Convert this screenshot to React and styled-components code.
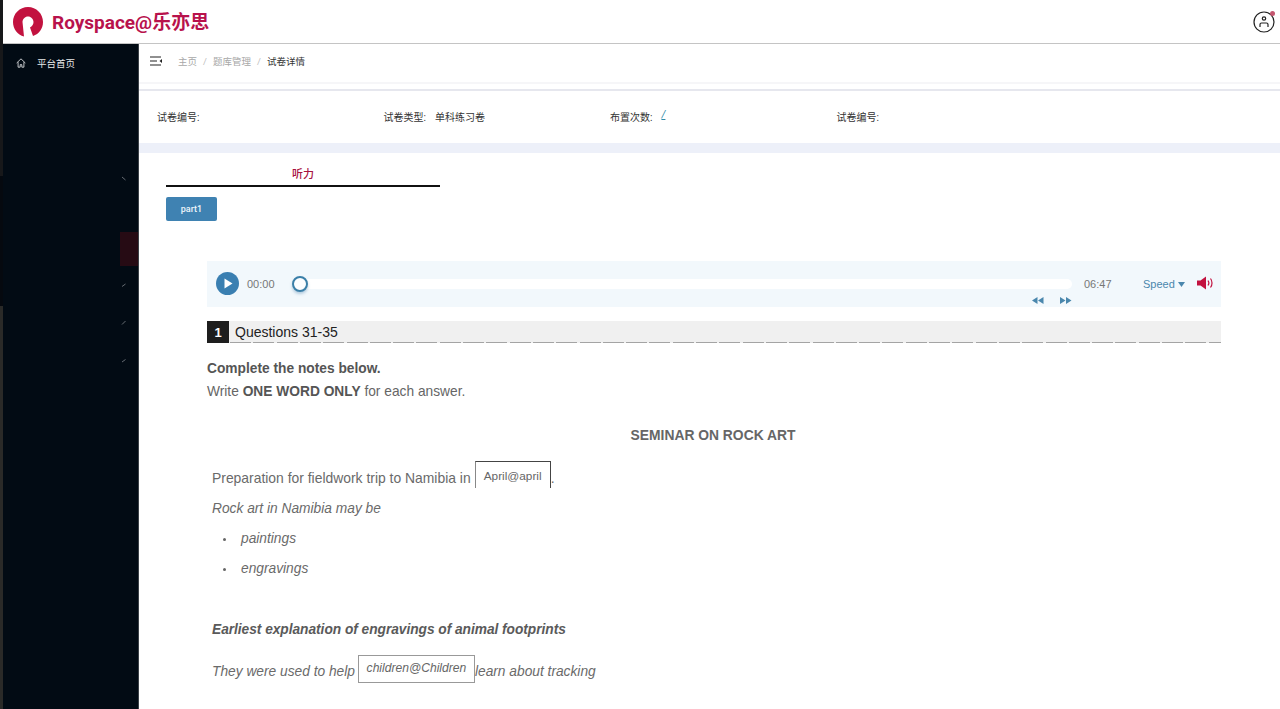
import React from "react";
import styled, { createGlobalStyle } from "styled-components";

const Global = createGlobalStyle`
  html, body { margin: 0; padding: 0; height: 100%; background: #fff; overflow: hidden; }
  #root { height: 709px; }
  * { box-sizing: border-box; }
`;
const CN = `"Roboto", "Noto Sans CJK SC", sans-serif`;
const HV = `"Liberation Sans", Arial, sans-serif`;

const Page = styled.div`display:flex;height:709px;width:1280px;background:#fff;`;
const Edge = styled.div`width:3px;flex:none;background:linear-gradient(#17181a 0,#17181a 176px,#05090f 176px,#05090f 306px,#2a2a28 306px,#2a2a28 100%);`;
const Shell = styled.div`flex:1;display:flex;flex-direction:column;min-width:0;`;
const Header = styled.header`height:44px;flex:none;display:flex;align-items:center;justify-content:space-between;padding:0 5px 0 10px;border-bottom:1px solid #c4c4c4;`;
const Brand = styled.div`display:flex;align-items:center;gap:9px;`;
const BrandName = styled.span`font:700 19px ${CN};color:#b8124c;line-height:24px;padding-top:2px;`;
const Avatar = styled.div`position:relative;width:22px;height:22px;`;
const Dot = styled.span`position:absolute;top:0;right:0;width:5px;height:5px;border-radius:50%;background:#c4566f;`;
const Body = styled.div`flex:1;display:flex;min-height:0;`;
const Side = styled.nav`width:136px;flex:none;background:#020b14;border-right:1px solid #3c4248;display:flex;flex-direction:column;`;
const HomeItem = styled.div`height:38px;display:flex;align-items:center;padding-left:13px;gap:11px;font:400 9.5px ${CN};color:#e7e9ea;`;
const Chev = styled.div`height:${p=>p.$h}px;margin-top:${p=>p.$top||0}px;display:flex;align-items:center;justify-content:flex-end;padding-right:11px;`;
const ActiveMark = styled.div`height:34px;width:18px;margin:${p=>p.$top}px 0 0 auto;background:#260b14;`;
const Main = styled.main`flex:1;min-width:0;display:flex;flex-direction:column;`;
const Crumbs = styled.div`height:38px;flex:none;display:flex;align-items:center;padding:0 0 4px 11px;font:400 9.5px ${CN};color:#a8a8a8;`;
const CrumbIcon = styled.span`display:flex;margin-right:16px;`;
const Sep = styled.span`margin:0 6px;color:#c0c0c0;`;
const CrumbNow = styled.span`color:#333;`;
const Tag = styled.div`height:7px;flex:none;background:#fff;border-top:2px solid #f6f6f8;`;
const Rule = styled.div`height:2px;flex:none;background:#e6e7ee;`;
const Info = styled.div`height:52px;flex:none;display:flex;align-items:center;padding:0 0 2px 18px;font:400 10px ${CN};color:#333;`;
const InfoCell = styled.div`width:226.5px;flex:none;display:flex;gap:9px;`;
const SlashLink = styled.span`color:#2f8aa8;font-style:italic;text-decoration:underline;font-size:10px;`;
const Band = styled.div`height:10px;flex:none;background:#edf0f9;`;
const Content = styled.div`flex:1;min-height:0;overflow:hidden;padding:0 59px 0 27px;`;
const Tabs = styled.div`width:274px;height:34px;display:flex;align-items:center;justify-content:center;border-bottom:2px solid #111;font:500 11px ${CN};color:#a8123f;padding:12px 0 4px;`;
const PartBtn = styled.button`display:block;margin-top:10px;width:51px;height:24px;border:0;border-radius:2px;background:#3f82b2;color:#eef5fa;font:500 9px ${CN};padding:0;`;
const Sheet = styled.div`margin:40px 0 0 41px;`;
const Player = styled.div`height:46px;background:#f2f8fc;display:flex;align-items:flex-start;padding-left:9px;font:400 11px ${HV};color:#777;`;
const PlayBtn = styled.span`width:23px;height:23px;margin-top:11px;border-radius:50%;background:#3a7fb1;display:flex;align-items:center;justify-content:center;flex:none;`;
const Time = styled.span`margin-top:17px;line-height:13px;width:${p=>p.$w}px;flex:none;margin-left:${p=>p.$l}px;`;
const TrackWrap = styled.div`position:relative;width:780px;flex:none;margin-left:7px;height:46px;`;
const Track = styled.div`position:absolute;left:0;right:0;top:18px;height:10px;background:#fff;border-radius:5px;`;
const Thumb = styled.span`position:absolute;left:0;top:15px;width:16px;height:16px;border-radius:50%;border:2px solid #3a7fa8;background:#fbfdff;box-shadow:0 2px 3px rgba(60,120,170,.35);`;
const Skips = styled.div`position:absolute;right:0;top:36px;display:flex;gap:16px;`;
const Speed = styled.span`margin:17px 0 0 0;line-height:13px;color:#4a87ad;display:flex;align-items:center;gap:3px;width:54px;flex:none;`;
const VolBtn = styled.span`margin-top:15px;display:flex;`;
const QBar = styled.div`position:relative;margin-top:14px;height:22px;background:#f0f0f0;display:flex;align-items:center;font:400 14px ${HV};color:#222;`;
const QNum = styled.span`width:22px;height:22px;background:#1e1e1e;color:#fff;font-weight:700;font-size:13px;display:flex;align-items:center;justify-content:center;margin-right:6px;flex:none;`;
const QLabel = styled.span`padding-bottom:1px;`;
const QDash = styled.span`position:absolute;left:23px;right:0;bottom:0;height:1px;background:repeating-linear-gradient(90deg,#a4a4a4 0 21px,transparent 21px 23.3px);`;
const Prose = styled.div`font:400 13.75px/23px ${HV};color:#666;`;
const Strong = styled.p`margin:0;font-weight:${p=>p.$w||700};margin-top:${p=>p.$top||0}px;color:${p=>p.$w?"#666":"#555"};`;
const BoldRun = styled.b`color:#555;`;
const Heading = styled.p`margin:21px 0 0;text-align:center;font-weight:700;font-size:13.85px;line-height:23px;padding-right:2px;`;
const Line = styled.p`margin:${p=>p.$top||0}px 0 0 5px;line-height:30px;font-size:${p=>p.$size||13.75}px;font-style:${p=>p.$it?"italic":"normal"};font-weight:${p=>p.$b?700:400};letter-spacing:${p=>p.$b?"-.04px":"0"};color:${p=>p.$b?"#5a5a5a":"#6a6a6a"};display:flex;align-items:center;`;
const BulletLine = styled(Line)`padding-left:11px;`;
const Bullet = styled.span`width:3px;height:3px;background:#666;border-radius:50%;margin-right:15px;`;
const Blank = styled.span`display:inline-flex;align-items:center;justify-content:center;color:#666;background:#fff;flex:none;`;
const OpenBlank = styled(Blank)`width:76px;height:27px;font-size:11.8px;border:1px solid;border-color:#444 #444 transparent #888;border-bottom:0;padding-top:3px;margin:-8px 0 0 4px;`;
const ClosedBlank = styled(Blank)`width:117px;height:28px;font-size:12.1px;border:1px solid #999;font-style:italic;padding-bottom:2px;margin:-7px 0 0 3px;`;

const Logo = () => (
  <svg width="30" height="30" viewBox="0 0 30 30">
    <path d="M11 29.500C4.500 27.800 0 21.800 0 15 0 6.700 6.700 0 15 0s15 6.700 15 15c0 6.500-4 12-10 14l-3-8.500c2-1 3.500-3 3.500-5.500 0-3-2.500-5.500-5.500-5.500S9.500 12 9.500 15z" fill="#c2123f"/>
  </svg>
);
const User = () => (
  <svg width="22" height="22" viewBox="0 0 22 22" fill="none" stroke="#222" strokeWidth="1.200">
    <circle cx="11" cy="11" r="10"/>
    <circle cx="11" cy="7.500" r="1.700"/>
    <path d="M7 16v-2.500c0-1 .8-1.500 1.500-1.500h5c.7 0 1.500.5 1.500 1.500V16"/>
  </svg>
);
const Home = () => (
  <svg width="10" height="10" viewBox="0 0 12 12" fill="none" stroke="#e7e9ea" strokeWidth="1">
    <path d="M.8 6 6 1l5.200 5M2.500 5v6h2.500V8h2v3h2.500V5"/>
  </svg>
);
const Chevron = ({ d }) => (
  <svg width="6" height="6" viewBox="0 0 6 6" fill="none" stroke="#7d8389" strokeWidth=".8"><path d={d}/></svg>
);
const Fold = () => (
  <svg width="12" height="10" viewBox="0 0 12 10" fill="none" stroke="#222" strokeWidth="1.200">
    <path d="M0 1h11M0 5h7M0 9h11"/><path d="M12 3 9.500 5 12 7z" fill="#222" stroke="none"/>
  </svg>
);
const Play = () => (<svg width="10" height="11" viewBox="0 0 10 11"><path d="M1.500.5 9.500 5.500 1.500 10.500z" fill="#fff"/></svg>);
const Caret = () => (<svg width="7" height="5" viewBox="0 0 7 5"><path d="M0 0h7L3.500 5z" fill="#4a87ad"/></svg>);
const Rew = () => (<svg width="12" height="7" viewBox="0 0 12 7"><path d="M5.500 0v7L0 3.500zM11.500 0v7L6 3.500z" fill="#4a87ad"/></svg>);
const Fwd = () => (<svg width="12" height="7" viewBox="0 0 12 7"><path d="M0 0v7l5.500-3.500zM6 0v7l5.500-3.500z" fill="#4a87ad"/></svg>);
const Volume = () => (
  <svg width="17" height="14" viewBox="0 0 17 14" fill="none">
    <path d="M0 4.500h3.500L9 .5v13L3.500 9.500H0z" fill="#c2123f"/>
    <path d="M11 4.500c1 1.400 1 3.600 0 5M13.500 2.500c2 2.500 2 6.500 0 9" stroke="#c2123f" strokeWidth="1.200"/>
  </svg>
);

export default function App() {
  return (
    <Page>
      <Global />
      <Edge />
      <Shell>
        <Header>
          <Brand><Logo /><BrandName>Royspace@乐亦思</BrandName></Brand>
          <Avatar><User /><Dot /></Avatar>
        </Header>
        <Body>
          <Side>
            <HomeItem><Home />平台首页</HomeItem>
            <Chev $h={38} $top={78}><Chevron d="M1 1l3.500 3"/></Chev>
            <ActiveMark $top={34} />
            <Chev $h={38}><Chevron d="M1 4.500l3.500-2.500"/></Chev>
            <Chev $h={38}><Chevron d="M1 4.500l3.500-3.500"/></Chev>
            <Chev $h={38}><Chevron d="M1 4l3.500-2.500"/></Chev>
          </Side>
          <Main>
            <Crumbs>
              <CrumbIcon><Fold /></CrumbIcon>
              主页<Sep>/</Sep>题库管理<Sep>/</Sep><CrumbNow>试卷详情</CrumbNow>
            </Crumbs>
            <Tag />
            <Rule />
            <Info>
              <InfoCell>试卷编号:</InfoCell>
              <InfoCell>试卷类型:<span>单科练习卷</span></InfoCell>
              <InfoCell>布置次数:<SlashLink>/</SlashLink></InfoCell>
              <InfoCell>试卷编号:</InfoCell>
            </Info>
            <Band />
            <Content>
              <Tabs>听力</Tabs>
              <PartBtn>part1</PartBtn>
              <Sheet>
                <Player>
                  <PlayBtn><Play /></PlayBtn>
                  <Time $w={38} $l={8}>00:00</Time>
                  <TrackWrap>
                    <Track />
                    <Thumb />
                    <Skips><Rew /><Fwd /></Skips>
                  </TrackWrap>
                  <Time $w={59} $l={12}>06:47</Time>
                  <Speed>Speed<Caret /></Speed>
                  <VolBtn><Volume /></VolBtn>
                </Player>
                <QBar><QNum>1</QNum><QLabel>Questions 31-35</QLabel><QDash /></QBar>
                <Prose>
                  <Strong $top={14}>Complete the notes below.</Strong>
                  <Strong $w={400}>Write <BoldRun>ONE WORD ONLY</BoldRun> for each answer.</Strong>
                  <Heading>SEMINAR ON ROCK ART</Heading>
                  <Line $top={16} $size={13.9}>Preparation for fieldwork trip to Namibia in<OpenBlank>April@april</OpenBlank>.</Line>
                  <Line $it $top={1}>Rock art in Namibia may be</Line>
                  <BulletLine $it><Bullet />paintings</BulletLine>
                  <BulletLine $it><Bullet />engravings</BulletLine>
                  <Line $it $b $top={31}>Earliest explanation of engravings of animal footprints</Line>
                  <Line $it $top={12}>They were used to help<ClosedBlank>children@Children</ClosedBlank>learn about tracking</Line>
                </Prose>
              </Sheet>
            </Content>
          </Main>
        </Body>
      </Shell>
    </Page>
  );
}
